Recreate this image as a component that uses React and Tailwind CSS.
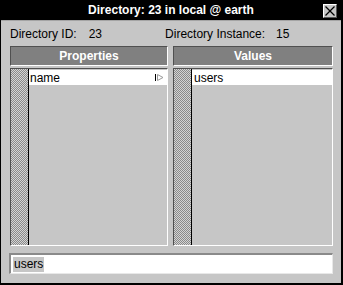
import React from "react";

function Hatch() {
  return (
    <div className="w-[18px] shrink-0 border-r border-black bg-[image:repeating-conic-gradient(#8a8a8a_0%_25%,#d4d4d4_0%_50%)] bg-size-[2px_2px]" />
  );
}

function Arrow() {
  return (
    <svg width="9" height="9" viewBox="0 0 9 9" className="block">
      <line x1="0.5" y1="1" x2="0.5" y2="8" stroke="#000" strokeWidth="1" />
      <polygon points="2.5,1.5 8,4.5 2.5,7.5" fill="none" stroke="#9a9a9a" strokeWidth="1" />
    </svg>
  );
}

export default function App() {
  return (
    <div
      className="w-[343px] h-[285px] bg-[#c6c6c6] border-l border-r-2 border-b-2 border-black flex flex-col text-black"
      style={{ fontFamily: '"Liberation Sans", Arial, sans-serif' }}
    >
      <div className="h-[20px] bg-black relative flex items-center justify-center shrink-0">
        <span className="text-white font-bold text-[12px] leading-[14px]">Directory: 23 in local @ earth</span>
        <div className="absolute right-[4px] top-[4px] w-[14px] h-[14px] bg-[#c6c6c6] border-t border-l border-white border-b border-r border-b-[#555] border-r-[#555] flex items-center justify-center">
          <svg width="10" height="10" viewBox="0 0 10 10" className="block">
            <line x1="0.5" y1="0.5" x2="9.5" y2="9.5" stroke="#000" strokeWidth="1.2" />
            <line x1="9.5" y1="0.5" x2="0.5" y2="9.5" stroke="#000" strokeWidth="1.2" />
          </svg>
        </div>
      </div>
      <div className="h-px bg-[#a4a4a4] shrink-0" />

      <div className="flex items-center h-[14px] mt-[6px] pl-[9px] text-[12px] leading-[14px]">
        <span>Directory ID:</span>
        <span className="ml-[12px]">23</span>
        <span className="ml-[63px]">Directory Instance:</span>
        <span className="ml-[11px]">15</span>
      </div>

      <div className="grid grid-cols-[158px_160px] gap-x-[5px] pl-[9px] mt-[5px]">
        <div className="h-[20px] bg-[#808080] border-t border-l border-[#505050] border-b border-r border-b-white border-r-white flex items-center justify-center text-white font-bold text-[12px] leading-[14px]">
          Properties
        </div>
        <div className="h-[20px] bg-[#808080] border-t border-l border-[#505050] border-b border-r border-b-white border-r-white flex items-center justify-center text-white font-bold text-[12px] leading-[14px]">
          Values
        </div>

        <div className="mt-[2px] h-[178px] border-t border-l border-[#505050] border-b border-r border-b-white border-r-white flex">
          <Hatch />
          <div className="flex-1 pt-px">
            <div className="h-[15px] bg-white flex items-center pl-[1px] pr-[3px] text-[12px] leading-[14px]">
              <span className="flex-1">name</span>
              <Arrow />
            </div>
          </div>
        </div>
        <div className="mt-[2px] h-[178px] border-t border-l border-[#505050] border-b border-r border-b-white border-r-white flex">
          <Hatch />
          <div className="flex-1 pt-px">
            <div className="h-[15px] bg-white flex items-center pl-[2px] text-[12px] leading-[14px]">
              users
            </div>
          </div>
        </div>
      </div>

      <div className="ml-[8px] mt-[7px] w-[324px] h-[21px] bg-white border-t-2 border-l-2 border-[#8a8a8a] border-b border-r border-b-[#e8e8e8] border-r-[#e8e8e8] flex items-center pl-[2px]">
        <span className="bg-[#c6c6c6] px-[1px] text-[12px] leading-[15px]">users</span>
      </div>
    </div>
  );
}
